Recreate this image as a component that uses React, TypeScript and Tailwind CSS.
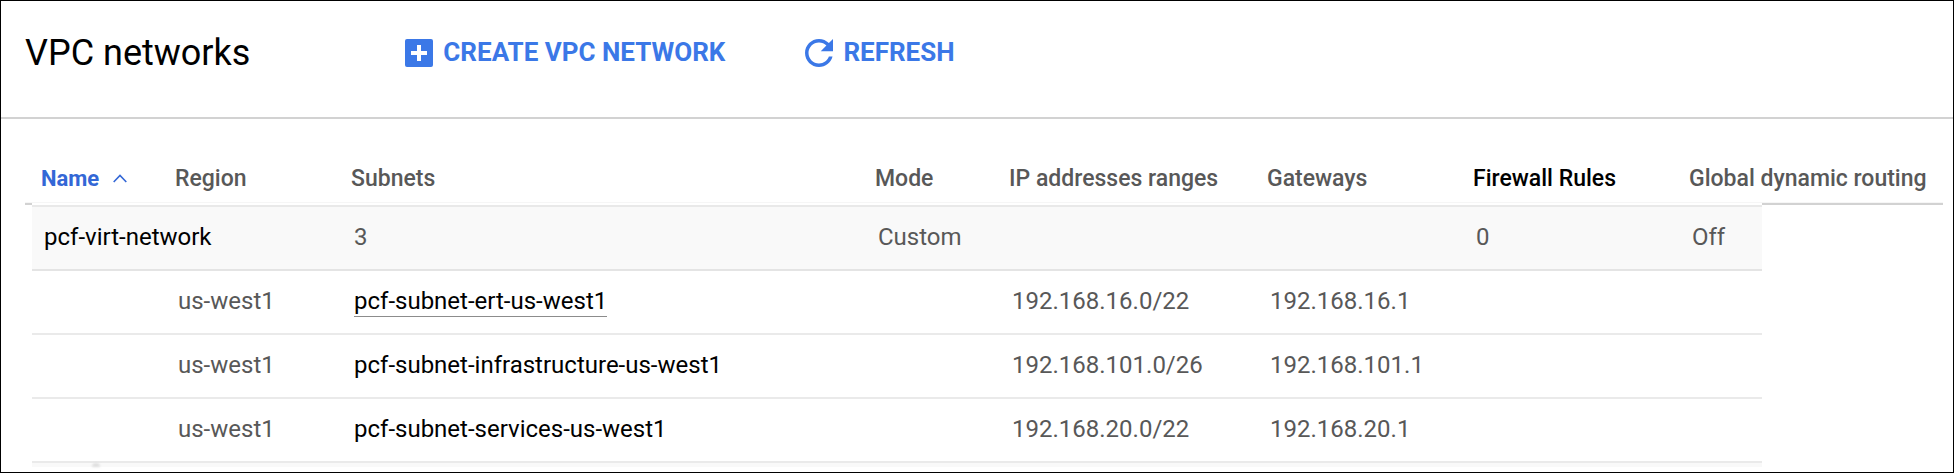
import React from "react";

type Subnet = { region: string; name: string; range: string; gateway: string; active?: boolean };

const subnets: Subnet[] = [
  { region: "us-west1", name: "pcf-subnet-ert-us-west1", range: "192.168.16.0/22", gateway: "192.168.16.1", active: true },
  { region: "us-west1", name: "pcf-subnet-infrastructure-us-west1", range: "192.168.101.0/26", gateway: "192.168.101.1" },
  { region: "us-west1", name: "pcf-subnet-services-us-west1", range: "192.168.20.0/22", gateway: "192.168.20.1" },
];

// Relative column widths; the first and last are gutters beside the body rows.
const columns = [7, 143, 176, 524, 134, 258, 206, 216, 73, 181];
const total = columns.reduce((a, b) => a + b, 0);

const head = "h-[84px] border-b border-[#f6f6f6] p-0 pt-9 text-left font-medium whitespace-nowrap";
const band =
  "h-[68px] border-t-2 border-b-2 border-t-white border-b-[#e4e4e4] bg-[#f9f9f9] p-0 pl-[3px] shadow-[inset_0_2px_0_#e9e9e9]";
const gutter = "border-t-2 border-[#d2d2d2] p-0";
const cell = "h-16 border-b-2 border-[#eaeaea] p-0 pl-[3px] pb-[2px]";

function AddBox() {
  return (
    <svg viewBox="0 0 28 28" className="size-7" aria-hidden="true">
      <rect width="28" height="28" rx="2" fill="currentColor" />
      <path d="M12 6h4v6h6v4h-6v6h-4v-6H6v-4h6z" fill="#fff" />
    </svg>
  );
}

function Refresh() {
  return (
    <svg viewBox="4 4 16 16" className="size-7" fill="currentColor" aria-hidden="true">
      <path d="M17.65 6.35C16.2 4.9 14.21 4 12 4c-4.42 0-7.99 3.58-7.99 8s3.57 8 7.99 8c3.73 0 6.84-2.55 7.73-6h-2.08c-.82 2.33-3.04 4-5.65 4-3.31 0-6-2.69-6-6s2.69-6 6-6c1.66 0 3.14.69 4.22 1.78L13 11h7V4l-2.35 2.35z" />
    </svg>
  );
}

export default function App() {
  return (
    <main className="min-h-screen border border-black bg-white font-['Roboto',sans-serif] text-[#585858]">
      <header className="flex h-[118px] items-start border-b-2 border-[#d2d2d2] pt-8 pl-6">
        <h1 className="mr-[155px] text-[36px] leading-10 text-black">VPC networks</h1>
        <div className="flex gap-20 text-[26px] leading-10 font-bold text-[#3b78e7]">
          <button type="button" className="flex items-center gap-[10px]">
            <AddBox />
            <span className="pb-[2px] leading-[38px]">CREATE VPC NETWORK</span>
          </button>
          <button type="button" className="flex items-center gap-[10px]">
            <Refresh />
            <span className="pb-[2px] leading-[38px]">REFRESH</span>
          </button>
        </div>
      </header>
      <div className="mr-[10px] ml-6">
        <table className="w-full table-fixed border-separate border-spacing-0 text-[24px] leading-8">
          <colgroup>
            {columns.map((w, i) => (
              <col key={i} style={{ width: `${(w / total) * 100}%` }} />
            ))}
          </colgroup>
          <thead className="text-[23px]">
            <tr>
              <th colSpan={2} aria-sort="ascending" className={`${head} text-[#3367d6]`}>
                <button type="button" className="flex items-center gap-[14px] pl-4 text-[22px] font-bold">
                  Name
                  <svg viewBox="0 0 14 9" className="h-[9px] w-[14px]" fill="none" stroke="currentColor" strokeWidth="1.6" aria-hidden="true">
                    <path d="M.7 8 7 1.5 13.3 8" />
                  </svg>
                </button>
              </th>
              <th className={head}>Region</th>
              <th className={head}>Subnets</th>
              <th className={head}>Mode</th>
              <th className={head}>IP addresses ranges</th>
              <th className={head}>Gateways</th>
              <th className={`${head} text-black`}>Firewall Rules</th>
              <th colSpan={2} className={head}>Global dynamic routing</th>
            </tr>
          </thead>
          <tbody>
            <tr>
              <td className={gutter} />
              <td colSpan={2} className={band}>
                <a href="#network" className="pl-[9px] text-black">pcf-virt-network</a>
              </td>
              <td className={band}>3</td>
              <td className={band}>Custom</td>
              <td className={band} />
              <td className={band} />
              <td className={band}>0</td>
              <td className={band}>Off</td>
              <td className={gutter} />
            </tr>
            {subnets.map((s) => (
              <tr key={s.name}>
                <td className="p-0" />
                <td className={cell} />
                <td className={cell}>{s.region}</td>
                <td className={cell}>
                  <a href="#subnet" className={s.active ? "border-b border-[#8c8c8c] pb-px text-black" : "text-black"}>
                    {s.name}
                  </a>
                </td>
                <td className={cell} />
                <td className={cell}>{s.range}</td>
                <td className={cell}>{s.gateway}</td>
                <td className={cell} />
                <td className={cell} />
                <td className="p-0" />
              </tr>
            ))}
            <tr>
              <td className="p-0" />
              <td colSpan={8} className="h-1 bg-[#f9f9f9] p-0">
                <div className="ml-[60px] h-1 w-2 rounded-t-full bg-[#dedede] blur-[1px]" />
              </td>
              <td className="p-0" />
            </tr>
          </tbody>
        </table>
      </div>
    </main>
  );
}
